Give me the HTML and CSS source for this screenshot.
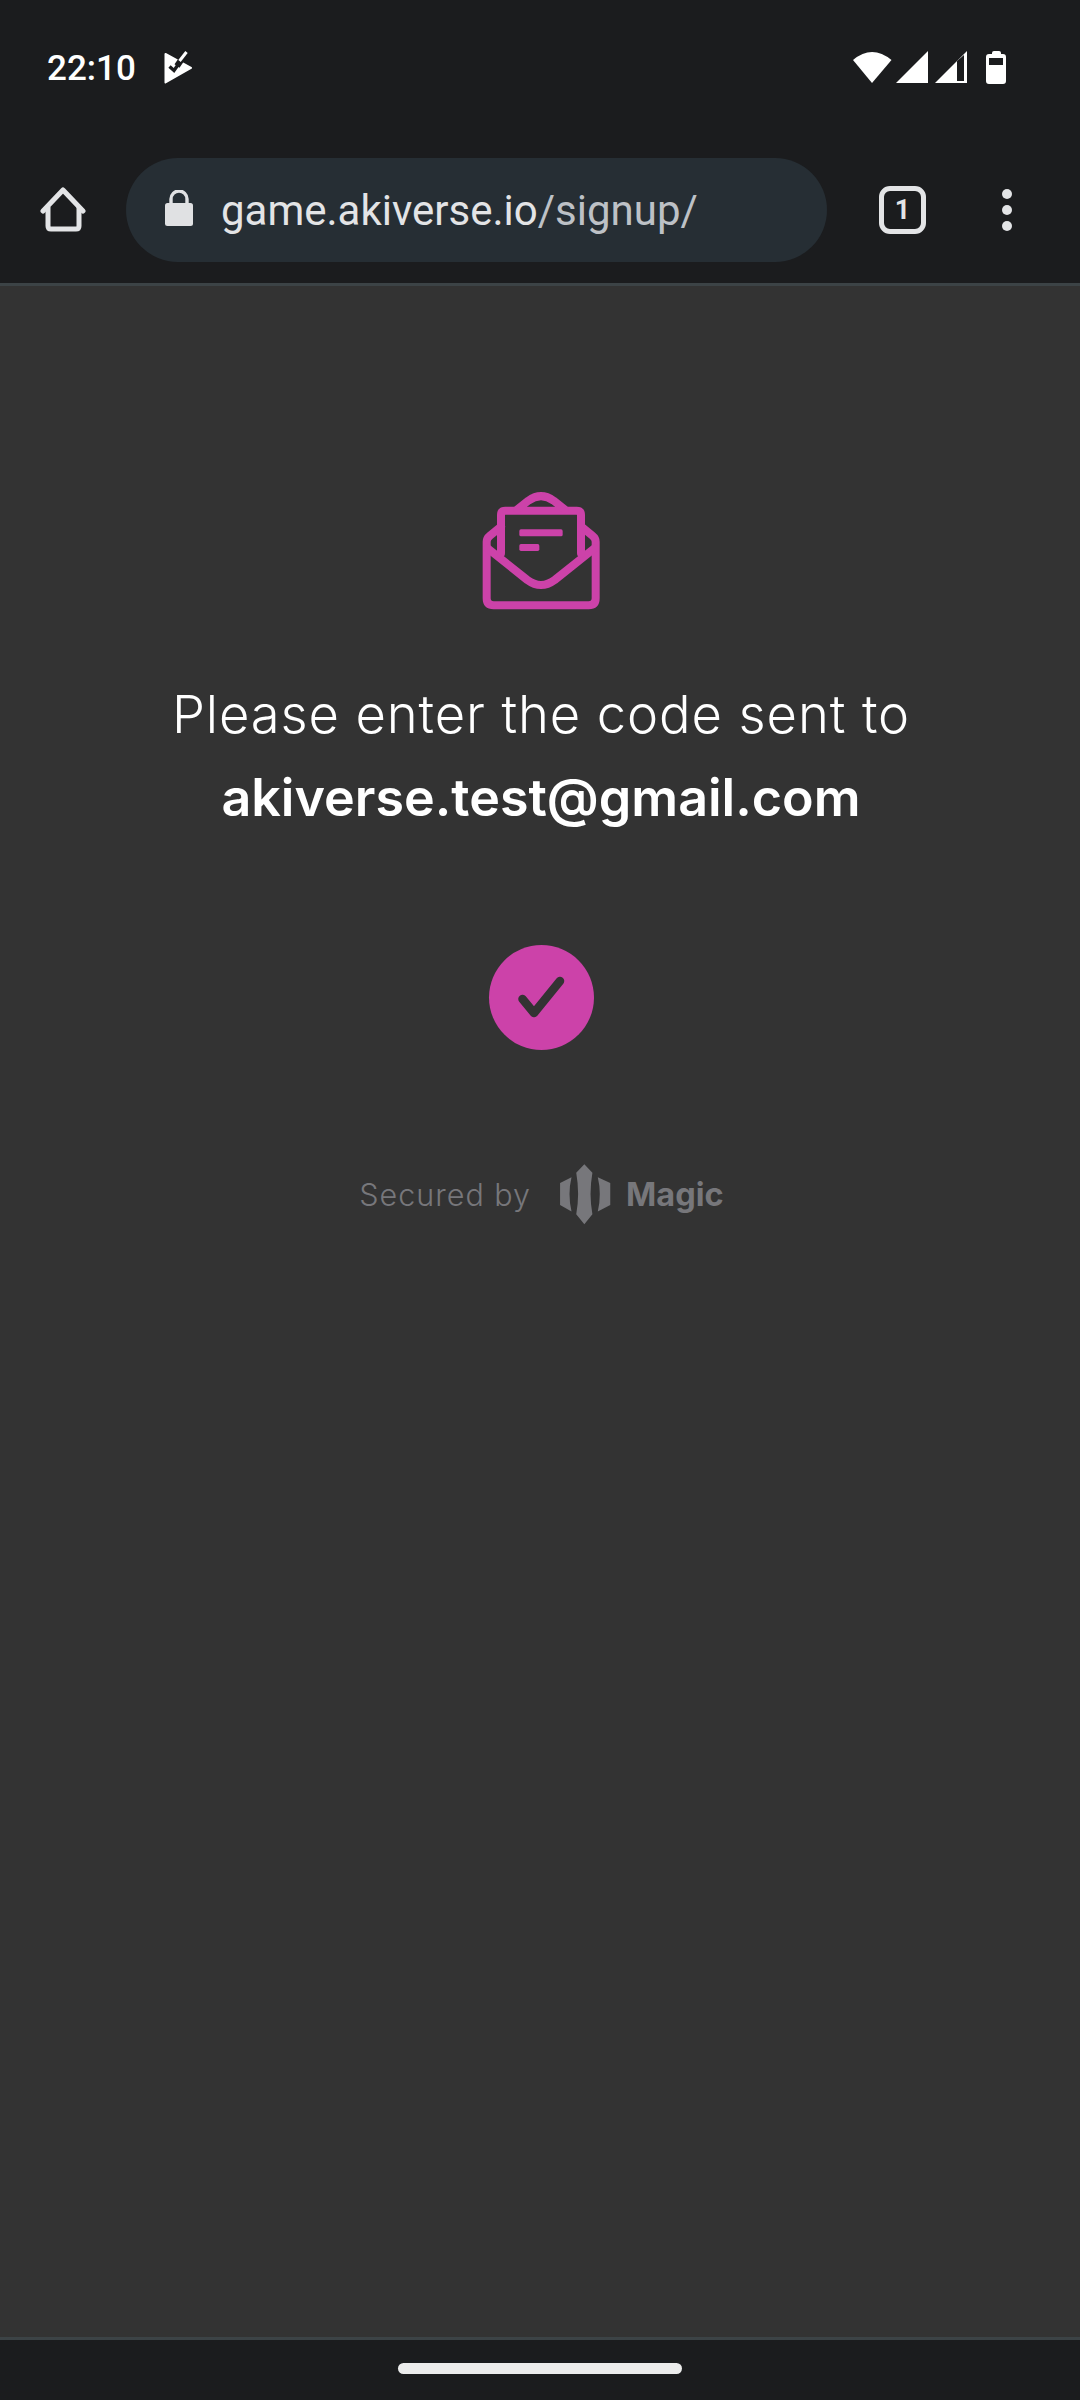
FILE: index.html
```html
<!DOCTYPE html>
<html>
  <head>
    <meta charset="UTF-8" />
    <title>Sign up</title>
    <link rel="stylesheet" href="styles.css">
  </head>
  <body>
    <header class="chrome">
      <div class="statusBar">
        <div class="statusLeft">
          <span class="time">22:10</span>
          <svg class="notifIcon" width="30" height="34" viewBox="0 0 30 34">
            <path d="M2.5 3 L28 17 L2.5 31.5 Z" fill="#fff" stroke="#fff" stroke-width="2" stroke-linejoin="round" />
            <path d="M14 15 L25 -1" fill="none" stroke="#1b1c1e" stroke-width="6" />
            <path d="M16.5 10 L23.5 1" fill="none" stroke="#fff" stroke-width="3" />
            <path d="M6.5 15.5 L11 19.5 L17 11" fill="none" stroke="#1b1c1e" stroke-width="3.4" />
          </svg>
        </div>
        <div class="statusRight">
          <svg width="153" height="34" viewBox="0 0 153 34">
            <path d="M0 9 Q19 -7 38.5 9 L19 32 Z" fill="#fff" />
            <path d="M43 32 L75 0 V32 Z" fill="#fff" />
            <path d="M82 32 L114 0 V32 Z" fill="#fff" />
            <path d="M104 10 L111 4 V30 H104 Z" fill="#1b1c1e" />
            <path d="M139 2 Q139 0 141 0 H146 Q148 0 148 2 V3 H150 Q153 3 153 6 V30 Q153 33 150 33 H136 Q133 33 133 30 V6 Q133 3 136 3 H139 Z" fill="#fff" />
            <rect x="136" y="7" width="14" height="7" fill="#1b1c1e" />
          </svg>
        </div>
      </div>
      <div class="toolbar">
        <svg class="homeIcon" width="48" height="48" viewBox="0 2 48 48">
          <path d="M3 27 L23 6 L43 27" fill="none" stroke="#e3e4e6" stroke-width="5" stroke-linejoin="round" stroke-linecap="round" />
          <path d="M8 23 V42 Q8 45 11 45 H36 Q39 45 39 42 V23" fill="none" stroke="#e3e4e6" stroke-width="5" />
        </svg>
        <div class="urlBar">
          <svg class="lockIcon" width="30" height="40" viewBox="0 1 30 40">
            <path d="M7 18 V10 A8 8 0 0 1 23 10 V18" fill="none" stroke="#e0e1e3" stroke-width="3.4" />
            <rect x="1" y="14" width="28" height="23" rx="2.5" fill="#e0e1e3" />
          </svg>
          <span class="url">game.akiverse.io<span class="urlPath">/signup/</span></span>
        </div>
        <div class="tabCount">1</div>
        <svg class="menuIcon" width="12" height="44" viewBox="0 0 12 44">
          <circle cx="6" cy="6" r="5" fill="#e3e4e6" />
          <circle cx="6" cy="22" r="5" fill="#e3e4e6" />
          <circle cx="6" cy="38" r="5" fill="#e3e4e6" />
        </svg>
      </div>
    </header>

    <main class="content">
      <svg class="mailIcon" width="120" height="120" viewBox="120 60 360 360">
        <g fill="none" stroke="#cc42a9" stroke-width="24" stroke-linejoin="round" stroke-linecap="round">
          <path d="M183 170 L150 197 Q140 205 140 215 V385 Q140 406 161 406 H446 Q467 406 467 385 V215 Q467 205 457 197 L424 170" />
          <path d="M143 235 L262 330 Q303 360 344 330 L463 235" />
          <path d="M183 250 V135 Q183 122 196 122 H410 Q423 122 423 135 V250" />
          <path d="M232 118 L265 92 Q303 65 341 92 L374 118" />
        </g>
        <rect x="238" y="178" width="130" height="21" rx="5" fill="#cc42a9" />
        <rect x="238" y="222" width="60" height="21" rx="5" fill="#cc42a9" />
      </svg>
      <p class="prompt">Please enter the code sent to</p>
      <p class="email">akiverse.test@gmail.com</p>
      <div class="checkCircle">
        <svg width="105" height="105" viewBox="0 0 105 105">
          <path d="M33.5 54 L45 68 L71 36" fill="none" stroke="#333" stroke-width="8.5" stroke-linecap="round" stroke-linejoin="round" />
        </svg>
      </div>
      <div class="secured">
        <span class="securedText">Secured by</span>
        <svg class="magicLogo" width="54" height="64" viewBox="650 40 160 190">
          <path d="M728 47 L752 72 Q741 135 752 195 L728 225 L704 195 Q715 135 704 72 Z" fill="#77777b" />
          <path d="M690 85 L656 102 V168 L690 187 Q678 135 690 85 Z" fill="#77777b" />
          <path d="M768 85 L805 102 V168 L768 187 Q780 135 768 85 Z" fill="#77777b" />
        </svg>
        <span class="magicText">Magic</span>
      </div>
    </main>

    <footer class="navBar">
      <div class="handle"></div>
    </footer>
  </body>
</html>
```

FILE: styles.css
```css
* {
  box-sizing: border-box;
}

html,
body {
  margin: 0;
  padding: 0;
}

body {
  width: 1080px;
  height: 2400px;
  display: flex;
  flex-direction: column;
  background-color: #333333;
  font-family: Inter, sans-serif;
}

.chrome {
  height: 286px;
  flex-shrink: 0;
  background-color: #1b1c1e;
  border-bottom: 3px solid #3c4346;
}

.statusBar {
  height: 135px;
  padding: 0 74px 0 47px;
  display: flex;
  justify-content: space-between;
  align-items: center;
}

.statusLeft {
  display: flex;
  align-items: center;
  gap: 27px;
}

.statusRight {
  display: flex;
}

.time {
  margin-top: 2px;
  font-family: Roboto, sans-serif;
  font-size: 35px;
  font-weight: 500;
  color: #fff;
}

.toolbar {
  height: 104px;
  margin-top: 23px;
  padding-left: 40px;
  display: flex;
  align-items: center;
}

.homeIcon {
  flex-shrink: 0;
}

.urlBar {
  width: 701px;
  height: 104px;
  margin-left: 38px;
  padding-left: 38px;
  display: flex;
  align-items: center;
  gap: 27px;
  background-color: #262e34;
  border-radius: 52px;
}

.url {
  font-family: Roboto, sans-serif;
  font-size: 42px;
  color: #e3e4e6;
}

.urlPath {
  color: #bdc1c6;
}

.tabCount {
  width: 47px;
  height: 48px;
  margin-left: 52px;
  display: flex;
  justify-content: center;
  align-items: center;
  border: 5px solid #e3e4e6;
  border-radius: 11px;
  font-family: Roboto, sans-serif;
  font-size: 27px;
  font-weight: 700;
  color: #e3e4e6;
}

.menuIcon {
  margin-left: 75px;
}

.content {
  flex: 1;
  display: flex;
  flex-direction: column;
  align-items: center;
  padding-top: 204px;
}

.prompt,
.email {
  margin: 0;
  color: #fff;
  text-align: center;
}

.prompt {
  margin-top: 75px;
  margin-left: 2px;
  font-size: 52.5px;
  font-weight: 300;
  letter-spacing: 0.9px;
  line-height: 58px;
}

.email {
  margin-top: 26px;
  margin-left: 2px;
  font-size: 52px;
  font-weight: 600;
  line-height: 58px;
}

.checkCircle {
  width: 105px;
  height: 105px;
  margin-top: 118px;
  margin-left: 3px;
  background-color: #cc42a9;
  border-radius: 50%;
}

.secured {
  margin-top: 112px;
  margin-left: 3px;
  display: flex;
  align-items: center;
}

.securedText {
  font-size: 30.5px;
  font-weight: 300;
  letter-spacing: 1px;
  color: #77777b;
}

.magicLogo {
  margin-left: 27px;
}

.magicText {
  margin-left: 14px;
  font-size: 32.5px;
  font-weight: 700;
  color: #77777b;
}

.navBar {
  height: 63px;
  flex-shrink: 0;
  padding-top: 23px;
  background-color: #1b1c1e;
  border-top: 3px solid #3c4346;
  display: flex;
  justify-content: center;
}

.handle {
  width: 284px;
  height: 11px;
  background-color: #ececec;
  border-radius: 6px;
}
```
